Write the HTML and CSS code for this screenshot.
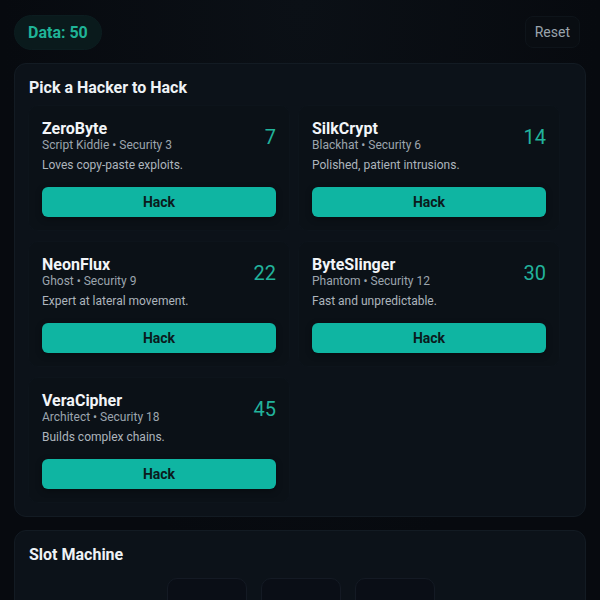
FILE: index.html
```
<!DOCTYPE html>
<html>
<head>
<meta charset="utf-8">
<link rel="stylesheet" href="styles.css">
</head>
<body>
<div class="app">
  <header class="topbar">
    <div class="data-pill">Data: 50</div>
    <button class="reset">Reset</button>
  </header>

  <section class="panel">
    <h2 class="panel-title">Pick a Hacker to Hack</h2>
    <div class="grid">
      <div class="card">
        <div class="card-head">
          <div class="who">
            <div class="name">ZeroByte</div>
            <div class="meta">Script Kiddie • Security 3</div>
          </div>
          <div class="reward">7</div>
        </div>
        <div class="desc">Loves copy-paste exploits.</div>
        <button class="hack">Hack</button>
      </div>
      <div class="card">
        <div class="card-head">
          <div class="who">
            <div class="name">SilkCrypt</div>
            <div class="meta">Blackhat • Security 6</div>
          </div>
          <div class="reward">14</div>
        </div>
        <div class="desc">Polished, patient intrusions.</div>
        <button class="hack">Hack</button>
      </div>
      <div class="card">
        <div class="card-head">
          <div class="who">
            <div class="name">NeonFlux</div>
            <div class="meta">Ghost • Security 9</div>
          </div>
          <div class="reward">22</div>
        </div>
        <div class="desc">Expert at lateral movement.</div>
        <button class="hack">Hack</button>
      </div>
      <div class="card">
        <div class="card-head">
          <div class="who">
            <div class="name">ByteSlinger</div>
            <div class="meta">Phantom • Security 12</div>
          </div>
          <div class="reward">30</div>
        </div>
        <div class="desc">Fast and unpredictable.</div>
        <button class="hack">Hack</button>
      </div>
      <div class="card">
        <div class="card-head">
          <div class="who">
            <div class="name">VeraCipher</div>
            <div class="meta">Architect • Security 18</div>
          </div>
          <div class="reward">45</div>
        </div>
        <div class="desc">Builds complex chains.</div>
        <button class="hack">Hack</button>
      </div>
    </div>
  </section>

  <section class="panel slot">
    <h2 class="panel-title">Slot Machine</h2>
    <div class="reels">
      <div class="reel"></div>
      <div class="reel"></div>
      <div class="reel"></div>
    </div>
  </section>
</div>
</body>
</html>
```

FILE: styles.css
```
* { box-sizing: border-box; }
html, body {
  margin: 0;
  height: 100%;
}
body {
  background: radial-gradient(ellipse at 50% 0%, #0b1016 0%, #070a0f 70%);
  background-color: #070a0f;
  font-family: Roboto, "Noto Sans", "Liberation Sans", sans-serif;
  color: #e8edf2;
  overflow: hidden;
}
.app {
  padding: 14px;
}
.topbar {
  display: flex;
  justify-content: space-between;
  align-items: center;
  height: 36px;
  margin-bottom: 13px;
}
.data-pill {
  height: 35px;
  padding: 0 13px 0 13px;
  border-radius: 18px;
  background: #0a1a1c;
  border: 1px solid #0c1d20;
  color: #1fb397;
  font-weight: 700;
  font-size: 16px;
  line-height: 33px;
}
.reset {
  height: 32px;
  margin-right: 6px;
  padding: 0 9px;
  background: #090d12;
  border: 1px solid #0e141a;
  border-radius: 8px;
  color: #9aa4ad;
  font-family: inherit;
  font-size: 14px;
}
.panel {
  background: #0c1219;
  border: 1px solid #131b23;
  border-radius: 12px;
  padding: 14px 13px 13px 14px;
  margin-bottom: 13px;
}
.panel-title {
  margin: 0 0 7px 0;
  font-size: 16px;
  line-height: 20px;
  font-weight: 700;
  color: #eef2f6;
}
.grid {
  display: grid;
  grid-template-columns: 262px 262px;
  column-gap: 8px;
  row-gap: 10px;
  margin-left: -1px;
}
.card {
  background: #0b1117;
  border: 1px solid #0d141b;
  border-radius: 10px;
  padding: 14px 13px 13px 13px;
  display: flex;
  flex-direction: column;
}
.card-head {
  display: flex;
  justify-content: space-between;
  align-items: center;
}
.name {
  font-size: 16px;
  line-height: 18px;
  font-weight: 700;
  color: #f2f5f8;
}
.meta {
  font-size: 12px;
  line-height: 15px;
  color: #9ca5ae;
}
.reward {
  font-size: 20px;
  color: #22b39c;
  line-height: 24px;
}
.desc {
  margin-top: 4px;
  font-size: 12px;
  line-height: 17px;
  color: #adb5bd;
}
.hack {
  margin-top: 13px;
  height: 30px;
  border: none;
  border-radius: 6px;
  background: #0fb5a2;
  color: #0b1a1c;
  font-family: inherit;
  font-weight: 700;
  font-size: 14px;
  box-shadow: 0 2px 6px rgba(0,0,0,0.35);
}
.slot .panel-title {
  margin-bottom: 13px;
}
.reels {
  display: flex;
  justify-content: center;
  gap: 14px;
}
.reel {
  width: 80px;
  height: 80px;
  background: #0a0e16;
  border: 1px solid #141a24;
  border-radius: 10px;
}
```
